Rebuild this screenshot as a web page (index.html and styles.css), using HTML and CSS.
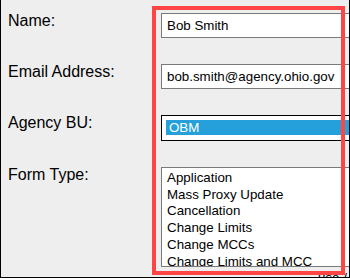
FILE: index.html
```html
<!DOCTYPE html>
<html lang="en">
<head>
    <meta charset="UTF-8">
    <meta name="viewport" content="width=device-width, initial-scale=1.0">
    <title>Request Form</title>

    <link rel="stylesheet" href="styles.css">
</head>
<body>
    <div class="frame">
        <div class="form-grid">
            <label class="field-label" for="name">Name:</label>
            <input class="text-input" type="text" id="name" value="Bob Smith" readonly />

            <label class="field-label" for="email">Email Address:</label>
            <input class="text-input" type="text" id="email" value="bob.smith@agency.ohio.gov" readonly />

            <div class="field-label">Agency BU:</div>
            <div class="single-list">
                <div class="list-selected">OBM</div>
            </div>

            <div class="field-label">Form Type:</div>
            <div class="multi-list">
                <div class="list-option">Application</div>
                <div class="list-option">Mass Proxy Update</div>
                <div class="list-option">Cancellation</div>
                <div class="list-option">Change Limits</div>
                <div class="list-option">Change MCCs</div>
                <div class="list-option">Change Limits and MCC</div>
                <div class="list-option">Close Account</div>
            </div>

            <div></div>
            <div class="list-note">use /</div>
        </div>

        <!-- annotation box drawn over the fields -->
        <div class="highlight-box"></div>
    </div>
</body>
</html>
```

FILE: styles.css
```css
* {
    box-sizing: border-box;
}
body {
    margin: 0;
    font-family: "Liberation Sans", Arial, sans-serif;
    color: #000;
}
.frame {
    position: relative;
    width: 350px;
    height: 278px;
    background-color: #eeeeee;
    border-left: 1px solid #000;
    border-right: 1px solid #000;
    border-bottom: 1px solid #000;
    padding: 13px 0 0 7px;
    overflow: hidden;
}
.form-grid {
    display: grid;
    grid-template-columns: 153px 260px;
    row-gap: 26px;
    align-items: start;
}
.field-label {
    font-size: 16px;
    line-height: 18px;
    margin-top: -1px;
}
.text-input {
    display: block;
    width: 100%;
    height: 25px;
    margin: 0;
    padding: 0 5px;
    border: 1px solid #7a7a7a;
    border-radius: 0;
    background-color: #fff;
    font-family: "Liberation Sans", Arial, sans-serif;
    font-size: 13.33px;
    color: #000;
    outline: none;
}
.single-list {
    height: 26px;
    border: 1px solid #000;
    background-color: #fff;
    padding: 4px 4px 5px 4px;
}
.list-selected {
    height: 15px;
    background-color: #26a0da;
    color: #fff;
    font-size: 13.33px;
    line-height: 15px;
    padding-left: 3px;
}
.multi-list {
    height: 100px;
    border: 1px solid #7a7a7a;
    background-color: #fff;
    padding: 2px 4px 0 5px;
    overflow: hidden;
}
.list-option {
    font-size: 13.33px;
    line-height: 16.7px;
    white-space: nowrap;
}
.list-note {
    margin-top: -23px;
    padding-left: 157px;
    font-size: 13.33px;
    line-height: 15px;
    white-space: nowrap;
}
.highlight-box {
    position: absolute;
    left: 151px;
    top: 6px;
    width: 193px;
    height: 269px;
    border: 4px solid #ff4545;
}
```
